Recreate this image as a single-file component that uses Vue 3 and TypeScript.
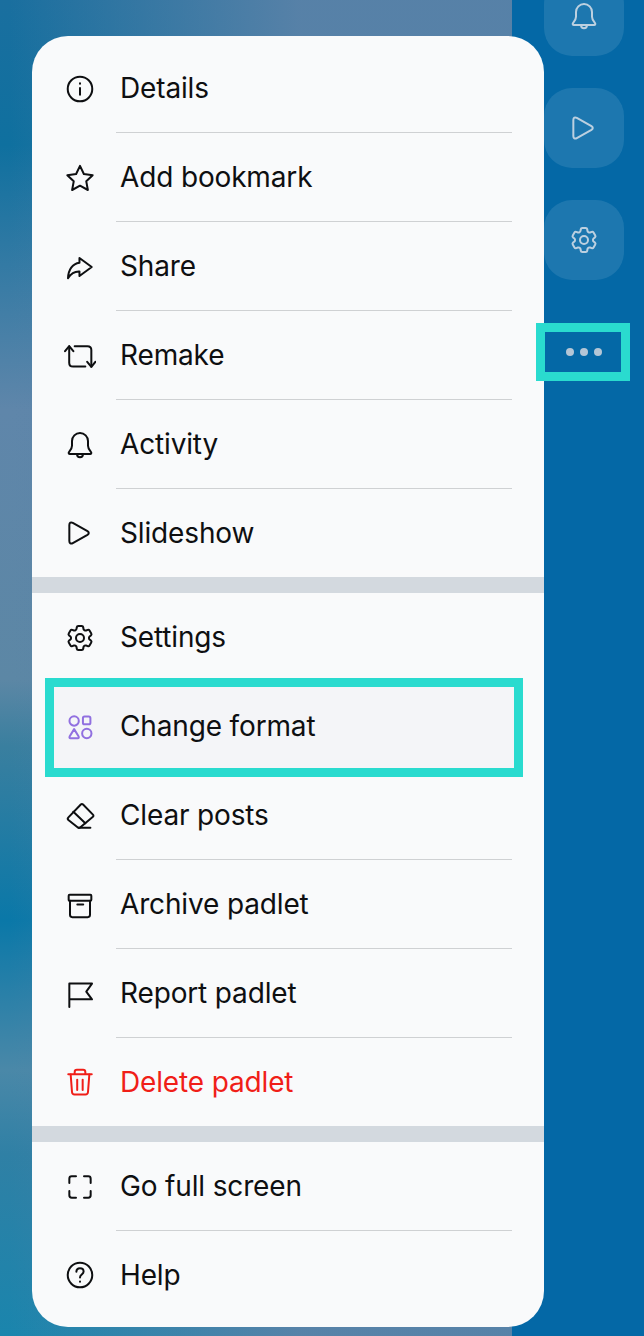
<template>
  <div class="screen">
    <div class="backdrop"></div>
    <aside class="rail">
      <button v-for="b in railButtons" :key="b" class="rail-btn">
        <svg class="rail-icon" viewBox="0 0 24 24" fill="none"><path v-for="d in icons[b]" :key="d" :d="d" /></svg>
      </button>
      <div class="more-wrap">
        <span class="dot"></span><span class="dot"></span><span class="dot"></span>
      </div>
    </aside>
    <div class="menu">
      <div v-for="(group, i) in groups" :key="i" class="group">
        <div
          v-for="item in group"
          :key="item.label"
          class="row"
          :class="{ active: item.active, danger: item.danger }"
        >
          <svg class="icon" viewBox="0 0 24 24" fill="none"><path v-for="d in icons[item.icon]" :key="d" :d="d" /></svg>
          <div class="label">{{ item.label }}</div>
        </div>
      </div>
    </div>
  </div>
</template>

<script setup lang="ts">
interface Item {
  label: string;
  icon: string;
  active?: boolean;
  danger?: boolean;
}

const icons: Record<string, string[]> = {
  info: [
    "M12 2.8a9.2 9.2 0 1 0 0 18.4a9.2 9.2 0 0 0 0-18.4Z",
    "M12 11.2v5.2",
    "M12 7.7v.3",
  ],
  star: [
    "M12 2.9l2.9 6.1 6.6.9-4.8 4.6 1.2 6.5-5.9-3.2-5.9 3.2 1.2-6.5-4.8-4.6 6.6-.9Z",
  ],
  share: [
    "M11.6 5.2L20.8 12L11.6 18.8V15.4C8 15.2 5.2 17 3 20.4C3.2 14 6.4 9.4 11.6 8.8Z",
  ],
  remake: [
    "M.8 8.4L3.9 4.6L7 8.4",
    "M3.9 4.8V17c0 1.8 1 2.9 2.9 2.9H16",
    "M8 4.6h9.6c1.9 0 2.9 1.1 2.9 2.9V20",
    "M17.4 16.4l3.1 3.7 3-3.7",
  ],
  bell: [
    "M3.8 17.2c1.2-1.2 2.2-2.6 2.2-4.6V9a6 6 0 0 1 12 0v3.6c0 2 1 3.4 2.2 4.6c.6.6.2 1.6-.6 1.6H4.4c-.8 0-1.2-1-.6-1.6Z",
    "M9.8 18.9c0 3 4.4 3 4.4 0",
  ],
  play: [
    "M4 6c0-1.7 1.2-2.4 2.6-1.6l11 6.2c1.3.8 1.3 2 0 2.8l-11 6.2c-1.4.8-2.6.1-2.6-1.6Z",
  ],
  gear: [
    "M9.594 3.94c.09-.542.56-.94 1.11-.94h2.593c.55 0 1.02.398 1.11.94l.213 1.281c.063.374.313.686.645.87.074.04.147.083.22.127.325.196.72.257 1.075.124l1.217-.456a1.125 1.125 0 0 1 1.37.49l1.296 2.247a1.125 1.125 0 0 1-.26 1.431l-1.003.827c-.293.241-.438.613-.43.992a7.723 7.723 0 0 1 0 .255c-.008.378.137.75.43.991l1.004.827c.424.35.534.955.26 1.43l-1.298 2.247a1.125 1.125 0 0 1-1.369.491l-1.217-.456c-.355-.133-.75-.072-1.076.124a6.47 6.47 0 0 1-.22.128c-.331.183-.581.495-.644.869l-.213 1.281c-.09.543-.56.94-1.11.94h-2.594c-.55 0-1.019-.398-1.11-.94l-.213-1.281c-.062-.374-.312-.686-.644-.87a6.52 6.52 0 0 1-.22-.127c-.325-.196-.72-.257-1.076-.124l-1.217.456a1.125 1.125 0 0 1-1.369-.49l-1.297-2.247a1.125 1.125 0 0 1 .26-1.431l1.004-.827c.292-.24.437-.613.43-.991a6.932 6.932 0 0 1 0-.255c.007-.38-.138-.751-.43-.992l-1.004-.827a1.125 1.125 0 0 1-.26-1.43l1.297-2.247a1.125 1.125 0 0 1 1.37-.491l1.216.456c.356.133.751.072 1.076-.124.072-.044.146-.086.22-.128.332-.183.582-.495.644-.869l.214-1.28Z",
    "M15 12a3 3 0 1 1-6 0a3 3 0 0 1 6 0Z",
  ],
  format: [
    "M7.6 4a3.5 3.5 0 1 0 0 7a3.5 3.5 0 0 0 0-7Z",
    "M15.4 4.2h3.2c.7 0 1.2.5 1.2 1.2v3.4c0 .7-.5 1.2-1.2 1.2h-3.2c-.7 0-1.2-.5-1.2-1.2V5.4c0-.7.5-1.2 1.2-1.2Z",
    "M7.6 13.6l3.4 5.6c.3.6 0 1.2-.6 1.2H4.8c-.6 0-.9-.6-.6-1.2Z",
    "M17.1 13.4a3.5 3.5 0 1 0 0 7a3.5 3.5 0 0 0 0-7Z",
  ],
  eraser: [
    "M3.3 13L12.6 3.4c.5-.5 1.2-.5 1.7 0l7.4 7.6c.5.5.5 1.2 0 1.6l-9.6 8c-.6.4-1.2.4-1.7 0L3.3 15c-.6-.6-.6-1.4 0-2Z",
    "M7 8.8l9 8.6",
    "M11 20.8h8.8",
  ],
  archive: [
    "M4.2 4.4h15.6c.4 0 .7.3.7.7v3c0 .4-.3.7-.7.7H4.2c-.4 0-.7-.3-.7-.7v-3c0-.4.3-.7.7-.7Z",
    "M4.5 8.8v10.6c0 1 .7 1.7 1.7 1.7h11.6c1 0 1.7-.7 1.7-1.7V8.8",
    "M10 11.6h4.4",
  ],
  flag: ["M4 21.8V4.2H21L16.7 10.2L21 16H4"],
  trash: [
    "M3.2 6.2h17.6",
    "M8 6V4.6C8 3.6 8.8 2.9 9.7 2.9h4.6c1 0 1.7.7 1.7 1.7V6",
    "M5 6.4l1 13.1c.1 1.1.8 1.9 1.9 1.9h8.2c1.1 0 1.8-.8 1.9-1.9l1-13.1",
    "M9.9 10.4v7.6",
    "M14 10.4v7.6",
  ],
  fullscreen: [
    "M4 9V5.8C4 4.8 4.8 4 5.8 4H9",
    "M15 4h3.2c1 0 1.8.8 1.8 1.8V9",
    "M20 15v3.2c0 1-.8 1.8-1.8 1.8H15",
    "M9 20H5.8C4.8 20 4 19.2 4 18.2V15",
  ],
  help: [
    "M12 2.8a9.2 9.2 0 1 0 0 18.4a9.2 9.2 0 0 0 0-18.4Z",
    "M9.3 9.6c0-1.6 1.1-2.7 2.7-2.7s2.7 1.1 2.7 2.5c0 2.2-2.7 2.3-2.7 4.4",
    "M12 16.8v.3",
  ],
};

const railButtons = ["bell", "play", "gear"];

const groups: Item[][] = [
  [
    { label: "Details", icon: "info" },
    { label: "Add bookmark", icon: "star" },
    { label: "Share", icon: "share" },
    { label: "Remake", icon: "remake" },
    { label: "Activity", icon: "bell" },
    { label: "Slideshow", icon: "play" },
  ],
  [
    { label: "Settings", icon: "gear" },
    { label: "Change format", icon: "format", active: true },
    { label: "Clear posts", icon: "eraser" },
    { label: "Archive padlet", icon: "archive" },
    { label: "Report padlet", icon: "flag" },
    { label: "Delete padlet", icon: "trash", danger: true },
  ],
  [
    { label: "Go full screen", icon: "fullscreen" },
    { label: "Help", icon: "help" },
  ],
];
</script>

<style>
body {
  margin: 0;
  background: #0468a6;
}
</style>

<style scoped>
.screen {
  position: relative;
  display: flex;
  justify-content: flex-end;
  width: 644px;
  height: 1336px;
  overflow: hidden;
  background: #0468a6;
  font-family: Inter, "Liberation Sans", sans-serif;
}
.backdrop {
  position: absolute;
  inset: 0 132px 0 0;
  background:
    linear-gradient(90deg, rgba(90, 130, 168, 0) 10px, rgba(90, 130, 168, 0.95) 300px),
    linear-gradient(
      180deg,
      #1a6f9f 0,
      #0f709f 145px,
      #5f86aa 410px,
      #5c87a5 680px,
      #3a7f9f 745px,
      #0a78a8 920px,
      #4a88a8 1070px,
      #2f80a5 1155px,
      #1a85ad 1336px
    );
}
.rail {
  position: relative;
  z-index: 2;
  width: 132px;
  display: flex;
  flex-direction: column;
  align-items: flex-start;
  gap: 32px;
  margin-top: -24px;
  padding-left: 32px;
  box-sizing: border-box;
}
.rail-btn {
  width: 80px;
  height: 80px;
  flex: none;
  padding: 0;
  border: 0;
  border-radius: 28px;
  background: rgba(255, 255, 255, 0.1);
  display: flex;
  align-items: center;
  justify-content: center;
}
.rail-icon {
  width: 32px;
  height: 32px;
  stroke: #bcd0e0;
  stroke-width: 1.5;
  stroke-linecap: round;
  stroke-linejoin: round;
}
.more-wrap {
  width: 76px;
  height: 40px;
  margin: 20px 0 0 1px;
  padding-left: 2px;
  box-sizing: border-box;
  flex: none;
  outline: 9px solid #2adbcf;
  display: flex;
  align-items: center;
  justify-content: center;
  gap: 6px;
}
.dot {
  width: 8px;
  height: 8px;
  border-radius: 50%;
  background: #b4c6d6;
}
.menu {
  position: absolute;
  left: 32px;
  top: 36px;
  width: 512px;
  height: 1291px;
  box-sizing: border-box;
  padding: 8px 0;
  border-radius: 36px;
  background: #f9fafb;
}
.group + .group {
  margin-top: 16px;
  position: relative;
}
.group + .group::before {
  content: "";
  position: absolute;
  left: 0;
  right: 0;
  top: -16px;
  height: 16px;
  background: #d3d9df;
}
.row {
  position: relative;
  display: flex;
  align-items: center;
  height: 89px;
  color: #0e0f11;
}
.row:last-child {
  height: 88px;
}
.icon {
  width: 32px;
  height: 32px;
  margin-left: 32px;
  flex: none;
  stroke: #0e0f11;
  stroke-width: 1.5;
  stroke-linecap: round;
  stroke-linejoin: round;
}
.label {
  flex: 1;
  height: 100%;
  margin-left: 20px;
  margin-right: 32px;
  padding-left: 4px;
  display: flex;
  align-items: center;
  font-size: 28px;
  line-height: 36px;
  letter-spacing: -0.15px;
  box-sizing: border-box;
  border-bottom: 1px solid #cfd1d3;
}
.row:last-child .label {
  border-bottom: 0;
}
.row.active {
  z-index: 1;
}
.row.active::before {
  content: "";
  position: absolute;
  left: 22px;
  right: 30px;
  top: 5px;
  bottom: 3px;
  background: #f4f5f8;
  outline: 9px solid #2adbcf;
}
.row.active .icon,
.row.active .label {
  position: relative;
}
.row.active .label {
  border-bottom-color: transparent;
}
.row.active .icon {
  stroke: #9170e0;
}
.row.danger {
  color: #f01e18;
}
.row.danger .icon {
  stroke: #f01e18;
}
</style>
